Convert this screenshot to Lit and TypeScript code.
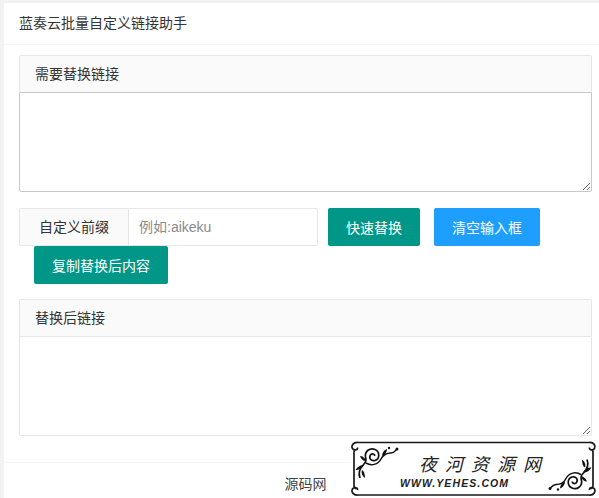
import { LitElement, html, css, svg } from "lit";
import { customElement } from "lit/decorators.js";

const ornament = svg`
  <path d="M9 38 C7 33 9 28 13 24 C15 22 15.5 20 14.5 17 C13.5 11 19 7.5 24 9.5 C29 11.5 29 19 24 20.5 C20 21.5 17.5 18 19.5 15 C21 13 24 14 23.5 16" fill="none" stroke="#111" stroke-width="1.7"/>
  <path d="M15 23 C20 26 27 25 30 19 C32 15 36 13 40 13 C43 13 44 11 46 9" fill="none" stroke="#111" stroke-width="1.5"/>
  <path d="M13 25 C9 25 6 27 4.500 30 C8 30 11 29 13 25 Z M11 30 C13 31 14 34 14 38 C11 36 10 33 11 30 Z M15 21 C12 21 10 19 9 16 C12 16 14 18 15 21 Z M31 16 C31 13 33 10 36 9 C36 12 34 15 31 16 Z" fill="#111"/>
  <circle cx="46" cy="9" r="1.500" fill="#111"/>
  <circle cx="38" cy="8" r="1.200" fill="#111"/>
`;

@customElement("app-root")
export class AppRoot extends LitElement {
  static styles = css`
    :host {
      display: block;
      height: 498px;
      overflow: hidden;
      position: relative;
      background: #f2f2f2;
      padding: 3px 0 0 4px;
      box-sizing: border-box;
      font-family: "Liberation Sans", "Noto Sans CJK SC", sans-serif;
      font-size: 14px;
      color: #333;
    }
    .card {
      background: #fff;
      height: 100%;
      display: flex;
      flex-direction: column;
    }
    .card-head {
      height: 41px;
      line-height: 41px;
      padding: 0 15px;
      border-bottom: 1px solid #f6f6f6;
      color: #333;
    }
    .card-body {
      padding: 10px 7px 26px 15px;
      display: flex;
      flex-direction: column;
    }
    .box-head {
      height: 36px;
      line-height: 36px;
      padding: 0 15px;
      background: #fafafa;
      border: 1px solid #e6e6e6;
      border-bottom: none;
      border-radius: 2px 2px 0 0;
    }
    textarea {
      display: block;
      width: 100%;
      height: 100px;
      box-sizing: border-box;
      margin: 0;
      padding: 6px 10px;
      background: #fff;
      border: 1px solid #e6e6e6;
      border-radius: 0 0 2px 2px;
      outline: none;
      font: inherit;
    }
    textarea.active { border-color: #c9c9c9; }
    .controls {
      display: flex;
      flex-wrap: wrap;
      margin: 16px 0 15px;
    }
    .label {
      box-sizing: border-box;
      width: 110px;
      height: 38px;
      line-height: 36px;
      text-align: center;
      background: #fafafa;
      border: 1px solid #e6e6e6;
      border-radius: 2px 0 0 2px;
    }
    input {
      box-sizing: border-box;
      width: 189px;
      height: 38px;
      margin: 0;
      padding: 0 10px;
      border: 1px solid #e6e6e6;
      border-left: none;
      border-radius: 0 2px 2px 0;
      outline: none;
      font: inherit;
      color: #333;
    }
    input::placeholder { color: #8a8a8a; opacity: 1; }
    button {
      height: 38px;
      padding: 0 18px;
      border: none;
      border-radius: 2px;
      background: #009688;
      color: #fff;
      font: inherit;
      white-space: nowrap;
    }
    button.blue { background: #1e9fff; margin-left: 14px; }
    .quick { margin-left: 10px; }
    .copy { margin-left: 15px; }
    .break { flex-basis: 100%; height: 0; }
    .footer {
      flex: 1;
      border-top: 1px solid #f6f6f6;
      line-height: 42px;
      text-align: center;
      padding-left: 8px;
      color: #444;
    }
    .mark {
      position: absolute;
      left: 351px;
      top: 440px;
      width: 248px;
      height: 58px;
      display: block;
    }
    .mark .cn {
      font-family: "Noto Sans CJK SC", sans-serif;
      font-size: 18px;
      font-style: italic;
      font-weight: 400;
      fill: #222;
      letter-spacing: 8px;
    }
    .mark .en {
      font-family: "Liberation Sans", sans-serif;
      font-size: 10.5px;
      font-style: italic;
      font-weight: 700;
      fill: #222;
      letter-spacing: 1.1px;
    }
  `;

  render() {
    return html`
      <div class="card">
        <div class="card-head">蓝奏云批量自定义链接助手</div>
        <div class="card-body">
          <div class="box-head">需要替换链接</div>
          <textarea class="active"></textarea>
          <div class="controls">
            <div class="label">自定义前缀</div>
            <input placeholder="例如:aikeku" />
            <button class="quick">快速替换</button>
            <button class="blue">清空输入框</button>
            <div class="break"></div>
            <button class="copy">复制替换后内容</button>
          </div>
          <div class="box-head">替换后链接</div>
          <textarea></textarea>
        </div>
        <div class="footer">源码网</div>
      </div>
      <svg class="mark" viewBox="0 0 248 58">
        <rect x="0" y="0" width="248" height="58" fill="#fff"/>
        <path d="M7 2.500 H238 M7 55 H238 M3 12 V46 M242 12 V46" fill="none" stroke="#1a1a1a" stroke-width="1.700"/>
        <g fill="none" stroke="#1a1a1a" stroke-width="1.700">
          <path id="c" d="M7 2.500 C2 2 0 6 1.500 8.500 C3 11 7 10 6.500 7.500 M3 12 C3 10 4 9.500 6 9.500"/>
          <path d="M7 55 C2 55.500 0 51.500 1.500 49 C3 46.500 7 47.500 6.500 50 M3 46 C3 48 4 48.500 6 48.500"/>
          <path d="M238 2.500 C243 2 245 6 243.500 8.500 C242 11 238 10 238.500 7.500 M242 12 C242 10 241 9.500 239 9.500"/>
          <path d="M238 55 C243 55.500 245 51.500 243.500 49 C242 46.500 238 47.500 238.500 50 M242 46 C242 48 241 48.500 239 48.500"/>
        </g>
        <g>${ornament}</g>
        <g transform="translate(245,57.500) rotate(180)">${ornament}</g>
        <text class="cn" x="68" y="31">夜河资源网</text>
        <text class="en" x="49" y="47">WWW.YEHES.COM</text>
      </svg>
    `;
  }
}
